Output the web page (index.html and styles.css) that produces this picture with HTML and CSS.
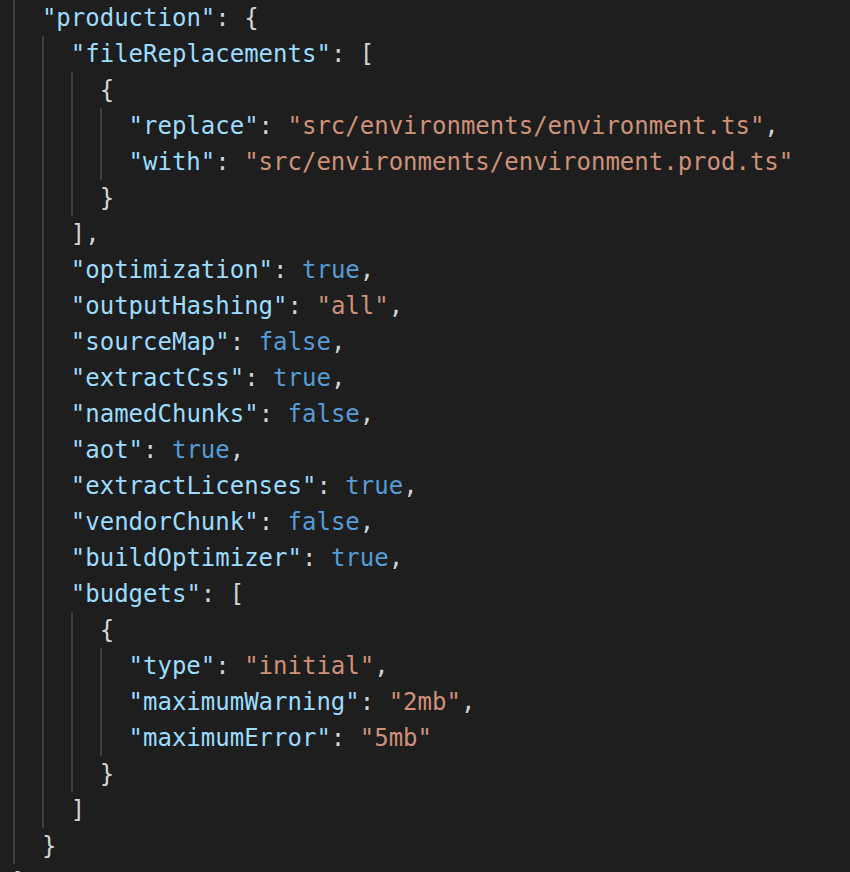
FILE: index.html
```html
<!DOCTYPE html>
<html>
<head>
<meta charset="utf-8">
<link rel="stylesheet" href="styles.css">
</head>
<body>
<div class="editor">
  <div class="line"><span class="ind g"></span><span class="k">"production"</span><span class="p">: {</span></div>
  <div class="line"><span class="ind g"></span><span class="ind g"></span><span class="k">"fileReplacements"</span><span class="p">: [</span></div>
  <div class="line"><span class="ind g"></span><span class="ind g"></span><span class="ind g"></span><span class="p">{</span></div>
  <div class="line"><span class="ind g"></span><span class="ind g"></span><span class="ind g"></span><span class="ind g"></span><span class="k">"replace"</span><span class="p">: </span><span class="s">"src/environments/environment.ts"</span><span class="p">,</span></div>
  <div class="line"><span class="ind g"></span><span class="ind g"></span><span class="ind g"></span><span class="ind g"></span><span class="k">"with"</span><span class="p">: </span><span class="s">"src/environments/environment.prod.ts"</span></div>
  <div class="line"><span class="ind g"></span><span class="ind g"></span><span class="ind g"></span><span class="p">}</span></div>
  <div class="line"><span class="ind g"></span><span class="ind g"></span><span class="p">],</span></div>
  <div class="line"><span class="ind g"></span><span class="ind g"></span><span class="k">"optimization"</span><span class="p">: </span><span class="b">true</span><span class="p">,</span></div>
  <div class="line"><span class="ind g"></span><span class="ind g"></span><span class="k">"outputHashing"</span><span class="p">: </span><span class="s">"all"</span><span class="p">,</span></div>
  <div class="line"><span class="ind g"></span><span class="ind g"></span><span class="k">"sourceMap"</span><span class="p">: </span><span class="b">false</span><span class="p">,</span></div>
  <div class="line"><span class="ind g"></span><span class="ind g"></span><span class="k">"extractCss"</span><span class="p">: </span><span class="b">true</span><span class="p">,</span></div>
  <div class="line"><span class="ind g"></span><span class="ind g"></span><span class="k">"namedChunks"</span><span class="p">: </span><span class="b">false</span><span class="p">,</span></div>
  <div class="line"><span class="ind g"></span><span class="ind g"></span><span class="k">"aot"</span><span class="p">: </span><span class="b">true</span><span class="p">,</span></div>
  <div class="line"><span class="ind g"></span><span class="ind g"></span><span class="k">"extractLicenses"</span><span class="p">: </span><span class="b">true</span><span class="p">,</span></div>
  <div class="line"><span class="ind g"></span><span class="ind g"></span><span class="k">"vendorChunk"</span><span class="p">: </span><span class="b">false</span><span class="p">,</span></div>
  <div class="line"><span class="ind g"></span><span class="ind g"></span><span class="k">"buildOptimizer"</span><span class="p">: </span><span class="b">true</span><span class="p">,</span></div>
  <div class="line"><span class="ind g"></span><span class="ind g"></span><span class="k">"budgets"</span><span class="p">: [</span></div>
  <div class="line"><span class="ind g"></span><span class="ind g"></span><span class="ind g"></span><span class="p">{</span></div>
  <div class="line"><span class="ind g"></span><span class="ind g"></span><span class="ind g"></span><span class="ind g"></span><span class="k">"type"</span><span class="p">: </span><span class="s">"initial"</span><span class="p">,</span></div>
  <div class="line"><span class="ind g"></span><span class="ind g"></span><span class="ind g"></span><span class="ind g"></span><span class="k">"maximumWarning"</span><span class="p">: </span><span class="s">"2mb"</span><span class="p">,</span></div>
  <div class="line"><span class="ind g"></span><span class="ind g"></span><span class="ind g"></span><span class="ind g"></span><span class="k">"maximumError"</span><span class="p">: </span><span class="s">"5mb"</span></div>
  <div class="line"><span class="ind g"></span><span class="ind g"></span><span class="ind g"></span><span class="p">}</span></div>
  <div class="line"><span class="ind g"></span><span class="ind g"></span><span class="p">]</span></div>
  <div class="line"><span class="ind g"></span><span class="p">}</span></div>
  <div class="line"><span class="p">}</span></div>
</div>
</body>
</html>
```
FILE: styles.css
```css
html, body {
  margin: 0;
  padding: 0;
  background: #1e1e1e;
  overflow: hidden;
}
.editor {
  padding-left: 13px;
  font-family: "DejaVu Sans Mono", monospace;
  font-size: 24px;
  line-height: 36px;
  color: #d4d4d4;
}
.line {
  display: flex;
  height: 36px;
  white-space: pre;
}
.ind {
  width: 2ch;
  flex: none;
}
.g {
  box-shadow: inset 2px 0 0 #404040;
}
.k { color: #9cdcfe; }
.s { color: #ce9178; }
.b { color: #569cd6; }
.p { color: #d4d4d4; }
```
